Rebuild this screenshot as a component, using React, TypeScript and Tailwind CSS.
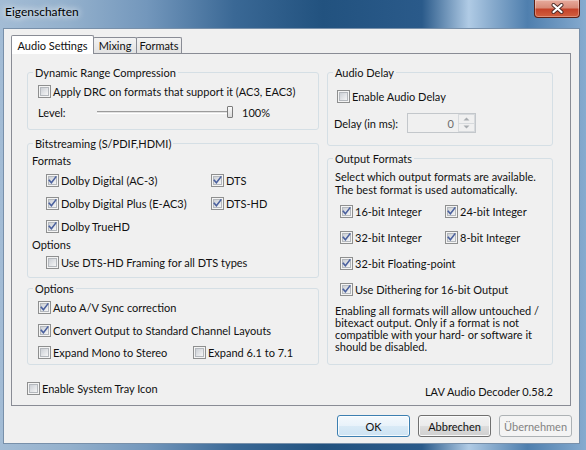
import React from "react";

function CheckBox({ checked }: { checked?: boolean }) {
  return (
    <svg width="13" height="13" viewBox="0 0 13 13" className="shrink-0 block">
      <defs>
        <linearGradient id="cbIn" x1="0" y1="0" x2="1" y2="1">
          <stop offset="0" stopColor="#c9cdd3" />
          <stop offset="1" stopColor="#f8f8f8" />
        </linearGradient>
      </defs>
      <rect x="0.5" y="0.5" width="12" height="12" fill="#f4f4f4" stroke="#8e8f8f" />
      <rect x="2.5" y="2.5" width="8" height="8" fill="url(#cbIn)" stroke="#b4b8bd" />
      {checked && (
        <path
          d="M3.3 6.4 L5.4 8.8 L9.8 3"
          fill="none"
          stroke="#4a609e"
          strokeWidth="1.6"
          strokeLinecap="square"
        />
      )}
    </svg>
  );
}

function Check({ label, checked }: { label: string; checked?: boolean }) {
  return (
    <div className="flex items-center h-[16px] gap-[2px]">
      <CheckBox checked={checked} />
      <span className="whitespace-nowrap">{label}</span>
    </div>
  );
}

function Group({
  title,
  className,
  children,
}: {
  title: string;
  className?: string;
  children: React.ReactNode;
}) {
  return (
    <fieldset
      className={`border border-[#d5dfe5] rounded-[3px] min-w-0 p-0 m-0 ${className ?? ""}`}
    >
      <legend className="ml-[5px] px-[2px] leading-[13px] whitespace-nowrap">{title}</legend>
      {children}
    </fieldset>
  );
}

function SpinArrow({ up }: { up?: boolean }) {
  return (
    <svg width="7" height="4" viewBox="0 0 7 4" className="block">
      <path d={up ? "M0.5 3.5 L3.5 0.5 L6.5 3.5 Z" : "M0.5 0.5 L3.5 3.5 L6.5 0.5 Z"} fill="#a8acb0" />
    </svg>
  );
}

export default function App() {
  return (
    <div className="w-[586px] h-[450px] overflow-hidden flex flex-col font-['Lato',sans-serif] text-[11px] leading-[13px] text-[#111] bg-[linear-gradient(90deg,#a3bcd5_0%,#93b0cc_12%,#7397bc_25%,#3a6895_40%,#22527f_55%,#2a5a8a_72%,#b0cbe5_80%,#88abcd_84%,#4f7fae_90%,#86abcf_100%)]">
      {/* Title bar */}
      <div className="h-[28px] shrink-0 flex items-start justify-between">
        <div className="pl-[5px] pt-[4px] text-[12px] leading-[15px] text-black [text-shadow:0_0_6px_rgba(255,255,255,0.95),0_0_10px_rgba(255,255,255,0.7)]">
          Eigenschaften
        </div>
        <div className="mr-[6px] w-[46px] h-[18px] rounded-b-[4px] border border-t-0 border-[#5e2015] bg-[linear-gradient(#e7ab9d_0%,#d88b78_45%,#c5432a_55%,#d2603f_100%)] shadow-[inset_0_0_0_1px_rgba(255,255,255,0.3)] flex items-center justify-center">
          <svg width="15" height="11" viewBox="0 0 15 11" className="block">
            <path d="M3.5 2 L11.5 9 M11.5 2 L3.5 9" stroke="#4b2a26" strokeWidth="4" strokeLinecap="round" />
            <path d="M3.5 2 L11.5 9 M11.5 2 L3.5 9" stroke="#ffffff" strokeWidth="2.2" strokeLinecap="round" />
          </svg>
        </div>
      </div>

      {/* Client area */}
      <div className="ml-[3px] mr-[6px] h-[416px] border border-[#7890aa] bg-[#f0f0f0] flex flex-col">
        {/* Tabs */}
        <div className="mt-[6px] ml-[7px] h-[18px] flex items-end">
          <div className="relative z-10 w-[83px] h-[19px] -mb-[1px] border border-b-0 border-[#898c95] rounded-t-[2px] bg-white flex items-center justify-center">
            Audio Settings
          </div>
          <div className="-ml-[1px] w-[44px] h-[16px] border border-b-0 border-[#898c95] rounded-t-[2px] bg-[linear-gradient(#f3f3f3,#e2e2e2)] flex items-center justify-center">
            Mixing
          </div>
          <div className="-ml-[1px] w-[46px] h-[16px] border border-b-0 border-[#898c95] rounded-t-[2px] bg-[linear-gradient(#f3f3f3,#e2e2e2)] flex items-center justify-center">
            Formats
          </div>
        </div>

        {/* Tab panel */}
        <div className="ml-[7px] mr-[8px] h-[353px] border border-[#898c95] bg-[#f0f0f0] flex pl-[15px] gap-[8px]">
          {/* Left column */}
          <div className="w-[292px] flex flex-col">
            <Group title="Dynamic Range Compression" className="mt-[12px]">
              <div className="pl-[10px] pt-[4px] pb-[9px]">
                <Check label="Apply DRC on formats that support it (AC3, EAC3)" />
                <div className="mt-[5px] h-[16px] flex items-center">
                  <span className="w-[59px]">Level:</span>
                  <div className="w-[130px] h-[3px] border-t border-[#9c9c9c] border-b border-b-white bg-[#e2e2e2]" />
                  <div className="w-[6px] h-[12px] border border-[#7b7b7b] rounded-[1px] bg-[linear-gradient(#fafafa,#dadada)]" />
                  <span className="ml-[9px]">100%</span>
                </div>
              </div>
            </Group>

            <Group title="Bitstreaming (S/PDIF,HDMI)" className="mt-[7px]">
              <div className="pl-[4px] pt-[3px] pb-[7px]">
                <div className="h-[14px] flex items-center">Formats</div>
                <div className="ml-[14px] mt-[5px] flex">
                  <div className="w-[165px]">
                    <Check checked label="Dolby Digital (AC-3)" />
                  </div>
                  <Check checked label="DTS" />
                </div>
                <div className="ml-[14px] mt-[7px] flex">
                  <div className="w-[165px]">
                    <Check checked label="Dolby Digital Plus (E-AC3)" />
                  </div>
                  <Check checked label="DTS-HD" />
                </div>
                <div className="ml-[14px] mt-[7px]">
                  <Check checked label="Dolby TrueHD" />
                </div>
                <div className="h-[14px] mt-[3px] flex items-center">Options</div>
                <div className="ml-[14px] mt-[3px]">
                  <Check label="Use DTS-HD Framing for all DTS types" />
                </div>
              </div>
            </Group>

            <Group title="Options" className="mt-[4px]">
              <div className="pl-[10px] pt-[4px] pb-[4px]">
                <Check checked label="Auto A/V Sync correction" />
                <div className="mt-[7px]">
                  <Check checked label="Convert Output to Standard Channel Layouts" />
                </div>
                <div className="mt-[6px] flex">
                  <div className="w-[155px]">
                    <Check label="Expand Mono to Stereo" />
                  </div>
                  <Check label="Expand 6.1 to 7.1" />
                </div>
              </div>
            </Group>

            <div className="mt-[15px]">
              <Check label="Enable System Tray Icon" />
            </div>
          </div>

          {/* Right column */}
          <div className="w-[226px] flex flex-col">
            <Group title="Audio Delay" className="mt-[12px]">
              <div className="pl-[9px] pt-[9px] pb-[12px]">
                <Check label="Enable Audio Delay" />
                <div className="mt-[9px] -ml-[3px] h-[20px] flex items-center">
                  <span className="w-[73px] whitespace-nowrap">Delay (in ms):</span>
                  <div className="w-[69px] h-[20px] border border-[#c3c7cb] bg-[#f0f0f0] flex">
                    <div className="flex-1 flex items-center justify-end pr-[4px] text-[#6d6d6d]">0</div>
                    <div className="w-[17px] flex flex-col">
                      <div className="flex-1 border border-[#d7dadd] flex items-center justify-center">
                        <SpinArrow up />
                      </div>
                      <div className="flex-1 border border-t-0 border-[#d7dadd] flex items-center justify-center">
                        <SpinArrow />
                      </div>
                    </div>
                  </div>
                </div>
              </div>
            </Group>

            <Group title="Output Formats" className="mt-[6px]">
              <div className="pl-[7px] pt-[5px] pb-[11px]">
                <div className="whitespace-nowrap leading-[13px]">
                  Select which output formats are available.
                  <br />
                  The best format is used automatically.
                </div>
                <div className="ml-[5px] mt-[7px] flex">
                  <div className="w-[105px]">
                    <Check checked label="16-bit Integer" />
                  </div>
                  <Check checked label="24-bit Integer" />
                </div>
                <div className="ml-[5px] mt-[10px] flex">
                  <div className="w-[105px]">
                    <Check checked label="32-bit Integer" />
                  </div>
                  <Check checked label="8-bit Integer" />
                </div>
                <div className="ml-[5px] mt-[10px]">
                  <Check checked label="32-bit Floating-point" />
                </div>
                <div className="ml-[5px] mt-[10px]">
                  <Check checked label="Use Dithering for 16-bit Output" />
                </div>
                <div className="mt-[8px] whitespace-nowrap leading-[12px]">
                  Enabling all formats will allow untouched /
                  <br />
                  bitexact output. Only if a format is not
                  <br />
                  compatible with your hard- or software it
                  <br />
                  should be disabled.
                </div>
              </div>
            </Group>

            <div className="mt-[19px] h-[14px] flex items-center justify-end whitespace-nowrap">
              LAV Audio Decoder 0.58.2
            </div>
          </div>
        </div>

        {/* Buttons */}
        <div className="mt-[9px] pr-[7px] flex justify-end gap-[8px]">
          <button className="w-[73px] h-[22px] rounded-[3px] border border-[#3c7fb1] bg-[linear-gradient(#f4f9fd_0%,#e8f2fa_50%,#d9eaf6_50%,#cde3f3_100%)] shadow-[inset_0_0_0_1px_rgba(255,255,255,0.8)] flex items-center justify-center">
            OK
          </button>
          <button className="w-[73px] h-[22px] rounded-[3px] border border-[#707070] bg-[linear-gradient(#f2f2f2_0%,#ebebeb_50%,#dddddd_50%,#cfcfcf_100%)] shadow-[inset_0_0_0_1px_rgba(252,252,252,0.9)] flex items-center justify-center">
            Abbrechen
          </button>
          <button className="w-[73px] h-[22px] rounded-[3px] border border-[#adb2b5] bg-[#f4f4f4] text-[#838383] flex items-center justify-center">
            Übernehmen
          </button>
        </div>
      </div>
    </div>
  );
}
